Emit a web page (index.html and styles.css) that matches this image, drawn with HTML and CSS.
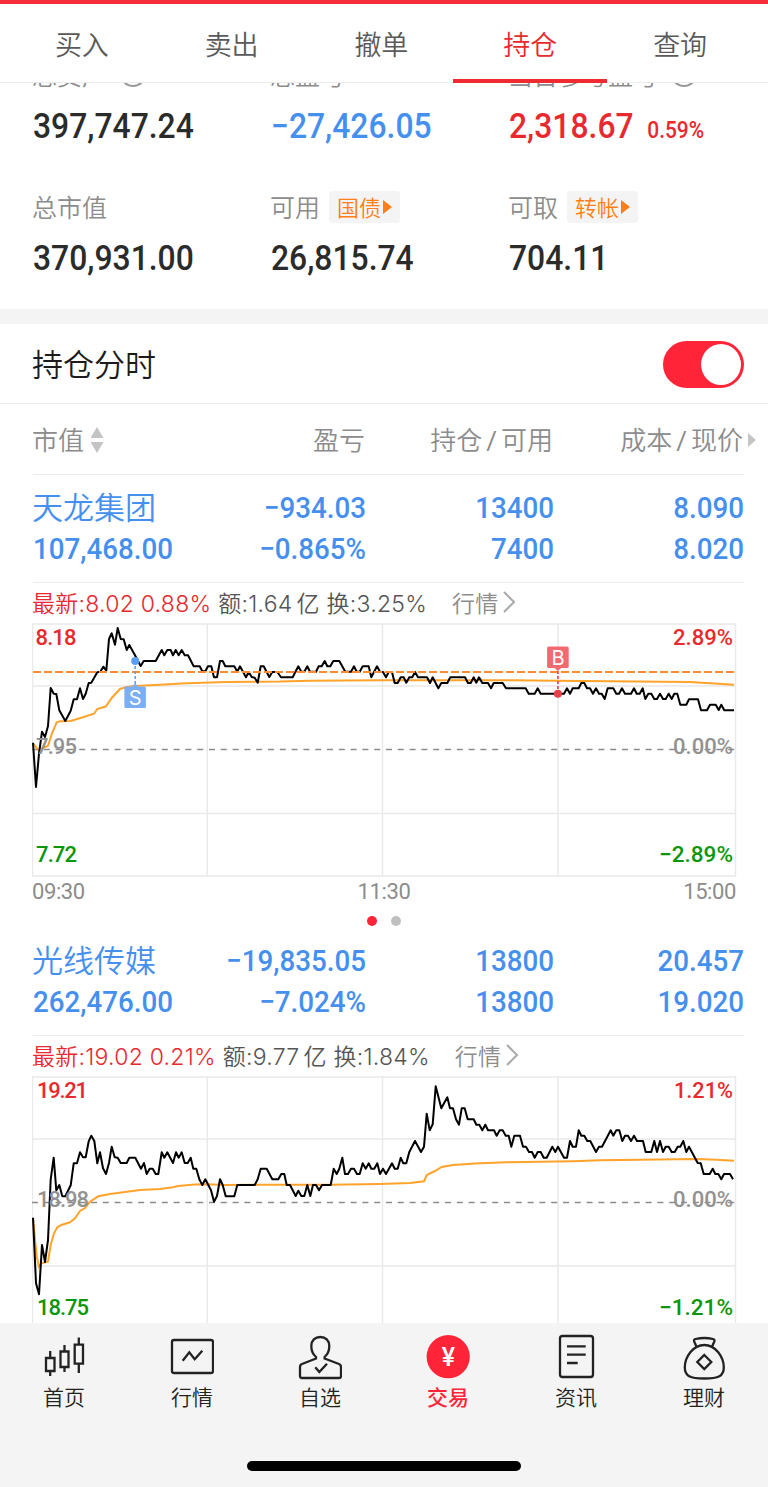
FILE: index.html
```html
<!DOCTYPE html>
<html lang="zh-CN">
<head>
    <meta charset="UTF-8">
    <meta name="viewport" content="width=device-width, initial-scale=1.0">
    <title>持仓</title>
    <link rel="stylesheet" href="styles.css">
</head>
<body>
    <header class="tabs">
        <a class="tab">买入</a>
        <a class="tab">卖出</a>
        <a class="tab">撤单</a>
        <a class="tab active">持仓</a>
        <a class="tab">查询</a>
    </header>

    <main>
        <section class="summary">
            <div class="item">
                <div class="label">总资产<span class="info-dot"></span></div>
                <div class="value">397,747.24</div>
            </div>
            <div class="item">
                <div class="label">总盈亏</div>
                <div class="value blue">−27,426.05</div>
            </div>
            <div class="item">
                <div class="label">当日参考盈亏<span class="info-dot"></span></div>
                <div class="value red">2,318.67<small>0.59%</small></div>
            </div>
            <div class="item">
                <div class="label">总市值</div>
                <div class="value">370,931.00</div>
            </div>
            <div class="item">
                <div class="label">可用<span class="chip">国债<i></i></span></div>
                <div class="value">26,815.74</div>
            </div>
            <div class="item">
                <div class="label">可取<span class="chip">转帐<i></i></span></div>
                <div class="value">704.11</div>
            </div>
        </section>

        <section class="switch-row">
            <h2>持仓分时</h2>
            <div class="toggle"></div>
        </section>

        <div class="table-head">
            <span class="sortable">市值<svg width="14" height="26" viewBox="0 0 14 26"><path d="M7 0l6.5 11H.5zM7 26L.5 15h13z"/></svg></span>
            <span>盈亏</span>
            <span>持仓<b>/</b>可用</span>
            <span>成本<b>/</b>现价</span>
            <i class="more"></i>
        </div>

        <article class="stock">
            <div class="position">
                <div><span class="name">天龙集团</span><div class="num">107,468.00</div></div>
                <div class="num">−934.03<br>−0.865%</div>
                <div class="num">13400<br>7400</div>
                <div class="num">8.090<br>8.020</div>
            </div>
            <div class="quote">
                <span class="red">最新:8.02 0.88%</span>
                <span class="q2">额:1.64<em>亿</em> 换:3.25%</span>
                <a>行情<svg width="14" height="22" viewBox="0 0 14 22"><path d="M2 1l10 10L2 21"/></svg></a>
            </div>
            <svg class="chart" width="705" height="254" viewBox="32 623 705 254">
                <path class="grid" d="M32 686H736M32 813.5H736M207.3 624V876M382.5 624V876M558 624V876"/>
                <rect class="frame" x="32.5" y="624" width="703" height="252"/>
                <path class="zero" d="M32 749.5H736"/>
                <polyline class="avg" points="33,743.3 38.3,750 48,745.7 52,733.3 56.7,722.3 60,721.3 70.7,721 77.3,719 94,713.7 97.3,709 106,706.3 111.7,698 120,689 126.7,687 135,686 160,684.7 186.7,683.3 226.7,682 280,681.6 310,680.7 383,680.3 510,680.3 556.7,680.7 610,681.3 690,682 710,683.3 734,684.7"/>
                <polyline class="price" points="33,742.7 36,787 39,753.7 42,731.7 45,737 48,726 50.7,688 53.7,693.7 56.3,694 59.3,710.3 65.3,721 70.7,710.7 73.7,699.3 77,699.3 80,688.3 83,699 85.7,693.7 88.7,683 91.3,682.7 97.3,672.3 100.3,671.7 103.3,666.7 106.3,670.7 109,639 111.7,633.3 115,644.7 117.7,628 120.7,639 123.7,639.3 126.7,650 129.3,645 135,655.3 140.7,666 143.7,661 155.7,661 161.7,650 164.3,655.3 167.3,650 170.7,650 173,655.3 175.7,650 178.7,655.3 181.7,650 184.7,655.3 188,655.3 193.7,666.3 199.7,666.3 202.3,671.3 205.3,671.3 208,666.3 211.3,666.3 214,677.3 217,677.3 220,661 222.7,661 225.3,666.3 234.3,666.3 237.3,671.7 240,666.3 246,677.3 248.7,672 251.7,677 254.7,677.7 257.7,682.7 260.7,666.3 263.7,666.3 269.3,677 272.3,672 277.3,672 281,677.3 292.7,677.3 298.3,666.3 301.3,671.7 304.3,671.7 307.3,666.3 310,671.7 316,671.7 318.7,666.3 321.7,666.3 324.7,661 327.3,666.3 330.3,666.3 333.3,661 339.3,661 345.3,671.7 351,671.7 354,666.3 356.7,671.7 359.7,671.7 362.7,666.3 368.7,666.3 371.3,677.3 377,666.3 380,671.7 383,672 386,677.3 388.7,672 392,672 394.7,683 397.7,683 400.7,677.3 403.7,677.3 406.3,682.7 409.3,677.3 412.3,677.3 415,672 418,677.3 427,677.3 430,683 432.7,677.3 438.3,688.3 441.3,683 447.3,683 450.3,677.3 465,677.3 468,683 470.7,683 473.7,677.3 476.3,682.7 479,677.3 482.3,683 488,683 491,688.3 493.7,683 502.7,683 506,688.3 525.7,688.3 528.7,693.7 534.7,693.7 537.7,688.3 540.7,693.7 564,693.7 567,688.3 570,693.7 572.7,688.3 578.7,688.3 581.3,683 584.3,683 587,688.3 590,688.3 593,693.7 596,688.3 599,693.7 601.7,693.7 604.7,699 607.7,688.3 613.3,688.3 616.3,693.7 619,693.7 622,688.3 625,693.7 631,693.7 634,688.3 636.7,693.7 639.7,693.7 642.7,688.3 645.3,699 648.3,693.7 651.3,693.7 654.3,699 657,699 660,693.7 663,699 665.7,699 668.7,693.7 671.7,699 674.3,693.7 677.3,693.7 680.3,704.7 686.3,704.7 689,699.3 698,699.3 701,710.3 707,710.3 710,704.7 715.7,704.7 718.7,710 721.3,704.7 724.3,710.3 734,710.3"/>
                <path class="cost" d="M33 672H734"/>
                <!-- sell / buy marks -->
                <g class="sell">
                    <path class="stem" d="M135.2 661V684"/>
                    <circle cx="135.2" cy="661" r="4"/>
                    <path d="M126 686.5h6l3.2-3 3.2 3h6q1.5 0 1.5 1.5v18.5q0 1.5-1.5 1.5h-18.5q-1.5 0-1.5-1.5v-18.5q0-1.5 1.6-1.5z"/>
                    <text x="135.2" y="705">S</text>
                </g>
                <g class="buy">
                    <path class="stem" d="M557.9 671V694"/>
                    <circle cx="557.9" cy="693.7" r="4"/>
                    <path d="M548.7 646.5h18.5q1.5 0 1.5 1.5v18.5q0 1.5-1.5 1.5h-6l-3.3 3-3.3-3h-6q-1.5 0-1.5-1.5v-18.5q0-1.5 1.6-1.5z"/>
                    <text x="558" y="665">B</text>
                </g>
                <g class="marks">
                    <text class="up" x="35.5" y="645" textLength="41">8.18</text>
                    <text class="flat" x="36" y="753.5" textLength="41">7.95</text>
                    <text class="down" x="36" y="862" textLength="41">7.72</text>
                    <text class="up" x="673" y="645" textLength="60" lengthAdjust="spacingAndGlyphs">2.89%</text>
                    <text class="flat" x="673" y="753.5" textLength="60" lengthAdjust="spacingAndGlyphs">0.00%</text>
                    <text class="down" x="659" y="862" textLength="74" lengthAdjust="spacingAndGlyphs">−2.89%</text>
                </g>
            </svg>
            <div class="times"><span>09:30</span><span>11:30</span><span>15:00</span></div>
            <div class="dots"><i class="on"></i><i></i></div>
        </article>

        <article class="stock">
            <div class="position">
                <div><span class="name">光线传媒</span><div class="num">262,476.00</div></div>
                <div class="num">−19,835.05<br>−7.024%</div>
                <div class="num">13800<br>13800</div>
                <div class="num">20.457<br>19.020</div>
            </div>
            <div class="quote">
                <span class="red">最新:19.02 0.21%</span>
                <span class="q2">额:9.77<em>亿</em> 换:1.84%</span>
                <a>行情<svg width="14" height="22" viewBox="0 0 14 22"><path d="M2 1l10 10L2 21"/></svg></a>
            </div>
            <svg class="chart" width="705" height="254" viewBox="32 1076 705 254">
                <path class="grid" d="M32 1139H736M32 1266H736M207.3 1077V1329M382.5 1077V1329M558 1077V1329"/>
                <rect class="frame" x="32.5" y="1077" width="703" height="252"/>
                <path class="zero" d="M32 1202.5H736"/>
                <polyline class="avg" points="33,1218 36.7,1256.7 39,1266.7 41.3,1263.3 48,1261.7 50.7,1245 54,1233.3 57.3,1227.3 61.3,1225 70,1222.3 75,1218.3 80,1211 85,1208 90,1201.7 98.3,1196.3 110,1194 140,1190 160,1189 173,1187.3 178,1186 195,1184.6 207,1184.3 225,1185 287,1184.7 330,1184.7 380,1184 410,1183 424,1181.3 426.7,1175 435,1171 441.7,1167 453,1165 475,1163.6 506.7,1162.3 573,1161.3 600,1160.3 640,1159.7 696.7,1159 716.7,1159.7 734,1160.7"/>
                <polyline class="price" points="33,1217.7 36,1283.3 39,1294.3 42,1245 45,1262 48,1240 50.7,1179.3 53.7,1157.7 56.3,1190.3 59.3,1185 62.3,1196.3 65.3,1196.3 70.7,1185.3 73.7,1163.3 77,1163.3 80,1152.3 83,1157.3 85.7,1157.3 88.7,1141.3 91.3,1135.7 94.3,1141 97.3,1163.3 100,1152.3 103,1168.3 106,1174 109,1163 111.7,1146.7 114.7,1157.3 117.7,1157.7 120.7,1163 126.7,1163 129.3,1157.7 135.3,1157.7 141,1168.7 144,1163 146.7,1174 149.7,1168.7 152.7,1168.7 155.7,1174 158.3,1174 161.7,1152.3 164.3,1157.7 167.3,1152.3 173,1163 176,1152.3 178.7,1157.7 181.7,1152.3 184.7,1163 187.7,1163 190.7,1157.7 193.3,1168.7 196.3,1168.7 199.3,1179.3 202.3,1185 205.3,1179.3 211,1190.3 214,1201.7 217,1196 220,1179.3 222.7,1185 225.7,1196.3 234.3,1196.3 237.3,1185 254.7,1185 257.7,1179.3 260.7,1168.7 266.7,1168.7 272.3,1179.3 278.3,1179.3 281.3,1174 284.3,1174 286.7,1185 290,1185 295.7,1196 298.3,1190.7 301.3,1196 304.3,1196 307.3,1185 310.3,1196 313,1185 316,1185 319,1190.3 322,1185 330.7,1185 333.7,1168.7 336.7,1174 339.3,1168.7 342.3,1157.7 345,1174 348,1174 351,1168.7 354,1168.7 357,1174 359.7,1174 362.7,1163.3 365.7,1168.7 368.7,1163.3 371.3,1168.7 374.3,1168.7 377.3,1163.3 380,1174 383,1168.7 386,1174 392,1163.3 394.7,1168.7 397.7,1168.7 400.7,1157.7 403.3,1163.3 406.3,1163.3 409.3,1152 415,1141 421,1152 424,1146.7 426.7,1113.7 429.7,1130.3 432.7,1124.3 435.7,1086.3 441.3,1108.3 447.3,1097.3 450,1108.3 453,1108.3 456,1119.3 459,1124.7 461.7,1108.3 464.7,1108.3 467.7,1119.3 473.7,1119.3 476.3,1124.7 479.3,1124.7 482.3,1130.3 485.3,1124.7 488,1130.3 494,1130.3 496.7,1135.7 499.7,1130.3 502.7,1130.3 505.7,1135.7 508.7,1135.7 511.3,1146.7 514.3,1135.7 520,1135.7 523,1146.7 526,1146.7 529,1152 532,1152 534.7,1157.7 537.7,1152 540.7,1152 543.7,1157.7 546.7,1157.7 552.3,1146.7 555.3,1152 558,1146.7 564,1157.7 567,1157.7 570,1141 572.7,1146.7 576,1146.7 578.7,1130.3 581.3,1135.7 584.3,1135.7 587.3,1141 590.3,1141 596,1152 599,1146.7 602,1146.7 610.7,1130.3 613.3,1135.7 616.3,1130.3 619.3,1130.3 622.3,1141 625,1135.7 628,1135.7 631,1141 634,1135.7 637,1141 643,1141 645.7,1152 651.3,1152 654.3,1141 657,1152 660,1141 663,1152 665.7,1146.7 668.7,1146.7 671.7,1152 674.7,1152 677.7,1146.7 680.3,1146.7 683.3,1141 686.3,1152 689,1146.7 697.7,1163 700.7,1163.3 703.7,1174 709.7,1174 712.7,1168.7 715.3,1174 718.3,1174 721.3,1179.3 724,1174 730,1174 733,1179.3"/>
                <g class="marks">
                    <text class="up" x="37" y="1098" textLength="51">19.21</text>
                    <text class="flat" x="37" y="1206.5" textLength="52">18.98</text>
                    <text class="down" x="37" y="1315" textLength="52">18.75</text>
                    <text class="up" x="674" y="1098" textLength="59" lengthAdjust="spacingAndGlyphs">1.21%</text>
                    <text class="flat" x="673" y="1206.5" textLength="60" lengthAdjust="spacingAndGlyphs">0.00%</text>
                    <text class="down" x="659" y="1315" textLength="74" lengthAdjust="spacingAndGlyphs">−1.21%</text>
                </g>
            </svg>
        </article>
    </main>

    <footer>
        <nav class="bottom-nav">
            <a>
                <svg width="44" height="46" viewBox="0 0 44 46"><path d="M4 24h8.500v13H4zM8.200 17v7M8.200 37v5M18.500 17.500h8V33h-8zM22.500 11v6M22.500 33v5M32.700 10.700H41v19h-8.300zM36.800 3.500v7M36.800 30v9"/></svg>
                首页
            </a>
            <a>
                <svg width="44" height="46" viewBox="0 0 44 46"><rect x="2" y="6" width="41" height="33" rx="2"/><path d="M12.700 26.700l6.600-8.400 5.400 7 7.600-8.600"/></svg>
                行情
            </a>
            <a>
                <svg width="44" height="46" viewBox="0 0 44 46"><path d="M18 24.500V23C14.500 20 13.300 16 13.300 12c0-5.500 3.700-9 9-9s9 3.500 9 9c0 4-1.200 8-4.700 11v1.500l14.400 5.500q2 .7 2 3V42q0 2-2 2H4q-2 0-2-2v-9q0-2.300 2-3z"/><path d="M17.300 33.300l4 4.700 7.700-8.300"/></svg>
                自选
            </a>
            <a class="active">
                <svg width="44" height="46" viewBox="0 0 44 46"><circle cx="22.200" cy="22.700" r="21.600"/><text x="22.300" y="31.500">¥</text></svg>
                交易
            </a>
            <a>
                <svg width="44" height="46" viewBox="0 0 44 46"><rect x="6" y="2" width="33" height="41" rx="2.500"/><path d="M13 12.300h18.700M13 20.700h18.700M13 29h10.700"/></svg>
                资讯
            </a>
            <a>
                <svg width="44" height="46" viewBox="0 0 44 46"><path d="M14.500 12.700l-2.300-5.200q-.7-2 1.300-2.500 9-2 17.500 0 2 .5 1.300 2.500L30 12.700"/><path d="M22.300 11C11 11 2.800 23 2.800 33.500 2.800 42 8 44.500 22.300 44.500S41.800 42 41.800 33.500C41.800 23 33.500 11 22.300 11z"/><path d="M22.300 21l7 7-7 7-7-7z"/></svg>
                理财
            </a>
        </nav>
        <div class="home-bar"></div>
    </footer>
</body>
</html>
```
FILE: styles.css
```css
* {
    box-sizing: border-box;
}
body {
    margin: 0;
    height: 1487px;
    display: flex;
    flex-direction: column;
    overflow: hidden;
    background: #fff;
    color: #2b2b2b;
    font-family: Roboto, "Noto Sans CJK SC", sans-serif;
}
i, em {
    font-style: normal;
}
.red {
    color: #e8292d;
}
.blue {
    color: #4590ee;
}

/* top tabs */
.tabs {
    display: flex;
    flex: none;
    height: 83px;
    padding: 0 13px 0 7px;
    border-top: 4px solid #f62d38;
    border-bottom: 1px solid #ececec;
}
.tab {
    flex: 1;
    display: flex;
    justify-content: center;
    line-height: 84px;
    font-size: 27px;
    font-weight: 350;
    color: #5a5a5a;
}
.tab.active {
    flex: none;
    width: 154px;
    margin: 0 -2px -1px -3px;
    color: #e8292d;
    border-bottom: 4px solid #f02a31;
}

main {
    flex: 1;
    min-height: 0;
    overflow: hidden;
}

/* account summary */
.summary {
    display: grid;
    grid-template-columns: 238px 238px 1fr;
    row-gap: 44px;
    margin-top: -24px;
    padding: 0 0 30px 33px;
    border-bottom: 15px solid #f4f4f4;
}
.label {
    display: flex;
    align-items: center;
    height: 32px;
    margin-left: -1px;
    padding-bottom: 3px;
    font-size: 25px;
    font-weight: 350;
    color: #8c8c8c;
    white-space: nowrap;
}
.info-dot {
    width: 26px;
    height: 26px;
    margin-left: 13px;
    border: 2px solid #999;
    border-radius: 50%;
}
.chip {
    display: flex;
    flex: none;
    align-items: center;
    height: 32px;
    margin: 3px 0 0 9px;
    padding: 0 8px 2px;
    border-radius: 4px;
    background: #f4f4f4;
    color: #ff7e17;
    font-size: 22px;
}
.chip i {
    margin: 1px 0 0 2px;
    border: 7px solid transparent;
    border-left: 9px solid #ff7e17;
    border-right: 0;
}
.value {
    height: 40px;
    margin-top: 16px;
    line-height: 40px;
    font-size: 35px;
    font-weight: 500;
    white-space: nowrap;
    transform: scaleX(0.91);
    transform-origin: left;
}
.value small {
    margin-left: 15px;
    font-size: 23px;
}

.switch-row {
    display: flex;
    justify-content: space-between;
    align-items: center;
    height: 80px;
    padding: 1px 24px 0 32px;
    border-bottom: 1px solid #ececec;
}
h2 {
    margin: 0 0 3px;
    font-size: 31px;
    font-weight: 350;
    color: #1c1c1c;
}
.toggle {
    width: 81px;
    height: 47px;
    padding: 3px;
    border-radius: 24px;
    background: #ff2438;
}
.toggle::after {
    content: "";
    display: block;
    width: 40px;
    height: 41px;
    margin-left: auto;
    border-radius: 50%;
    background: #fff;
}

.table-head, .position {
    display: grid;
    grid-template-columns: 160px 173px 188px 190px;
    margin: 0 24px 0 33px;
    border-bottom: 1px solid #ececec;
    text-align: right;
}
.table-head {
    position: relative;
    height: 71px;
    line-height: 75px;
    font-size: 26px;
    font-weight: 350;
    color: #8c8c8c;
}
.table-head span {
    margin: 0 1px 0 -1px;
}
.table-head b {
    margin: 0 4px;
    font-weight: 400;
}
.sortable {
    display: flex;
    align-items: center;
    gap: 6px;
}
.sortable svg {
    margin-top: -3px;
    fill: #c4c4c4;
}
.more {
    position: absolute;
    right: -12px;
    top: 29px;
    border: 7px solid transparent;
    border-left: 8px solid #c4c4c4;
    border-right: 0;
}

/* holdings */
.position {
    height: 108px;
    padding-top: 12px;
    line-height: 41px;
    font-size: 30px;
    color: #4590ee;
}
.position > :first-child {
    text-align: left;
}
.num {
    font-weight: 500;
    white-space: nowrap;
    transform: scaleX(0.925);
    transform-origin: right;
}
.position .num .num, .position > :first-child .num {
    transform-origin: left;
}
.name {
    display: block;
    height: 41px;
    margin-left: -1px;
    line-height: 43px;
    font-size: 31px;
    font-weight: 350;
}
.quote {
    display: flex;
    align-items: center;
    height: 40px;
    padding: 0 0 2px 32px;
    font-family: Inter, "Noto Sans CJK SC", sans-serif;
    font-size: 23px;
    font-weight: 350;
    letter-spacing: 0.25px;
    color: #555;
    white-space: nowrap;
}
.q2 {
    margin-left: 7px;
}
.q2 em {
    margin-left: 4px;
}
.quote a {
    display: flex;
    align-items: center;
    margin-left: 25px;
    color: #8c8c8c;
}
.quote svg {
    margin-left: 4px;
    fill: none;
    stroke: #aaa;
    stroke-width: 2;
}

.chart {
    display: block;
    margin-left: 32px;
    fill: none;
}
.grid, .frame {
    stroke: #e9e9e9;
    stroke-width: 1.5;
}
.zero {
    stroke: #8c8c8c;
    stroke-width: 1.3;
    stroke-dasharray: 6 5.8;
}
.avg {
    stroke: #ffa32b;
    stroke-width: 2;
}
.price {
    stroke: #000;
    stroke-width: 2;
    stroke-linejoin: round;
}
.cost {
    stroke: #ff8a30;
    stroke-width: 2;
    stroke-dasharray: 8 3;
}
.sell {
    fill: #7aaef5;
}
.sell circle {
    fill: #5a9ef5;
}
.buy {
    fill: #f06a70;
}
.buy circle {
    fill: #e8404a;
}
.stem {
    stroke: #5a9ef5;
    stroke-width: 1.6;
    stroke-dasharray: 3 2;
}
.buy .stem {
    stroke: #e8404a;
}
.sell text, .buy text {
    fill: #fff;
    font-family: Inter, sans-serif;
    font-size: 20px;
    text-anchor: middle;
}
.marks {
    font-size: 22px;
    font-weight: 500;
}
.up {
    fill: #e8292d;
}
.flat {
    fill: #929292;
}
.down {
    fill: #0a970a;
}
.times {
    display: flex;
    justify-content: space-between;
    height: 30px;
    margin: 0 32px;
    line-height: 30px;
    font-size: 22px;
    font-weight: 450;
    letter-spacing: -0.4px;
    color: #8c8c8c;
}
.dots {
    display: flex;
    justify-content: center;
    gap: 14px;
    height: 21px;
    padding-top: 9px;
}
.dots i {
    width: 10px;
    height: 10px;
    border-radius: 50%;
    background: #c0c0c0;
}
.dots .on {
    background: #ff2438;
}

/* bottom navigation */
footer {
    flex: none;
    height: 164px;
    background: #f4f4f4;
}
.bottom-nav {
    display: flex;
    height: 138px;
    padding-top: 11px;
}
.bottom-nav a {
    flex: 1;
    display: flex;
    flex-direction: column;
    align-items: center;
    line-height: 36px;
    font-size: 21px;
    font-weight: 350;
    color: #222;
}
.bottom-nav svg {
    fill: none;
    stroke: #222;
    stroke-width: 2.3;
}
.bottom-nav .active {
    color: #ff2438;
    font-weight: 500;
}
.bottom-nav circle {
    fill: #ff2438;
    stroke: none;
}
.bottom-nav text {
    fill: #fff;
    stroke: none;
    font-size: 25px;
    font-weight: 500;
    text-anchor: middle;
}
.home-bar {
    width: 274px;
    height: 10px;
    margin: 0 auto;
    border-radius: 5px;
    background: #000;
}
```
